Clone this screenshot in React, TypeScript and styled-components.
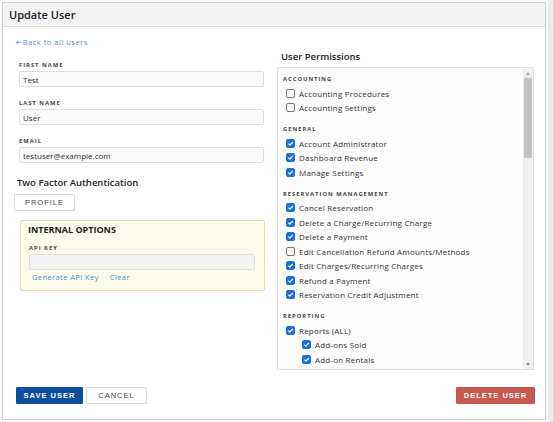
import styled, { createGlobalStyle } from 'styled-components'

const GlobalStyle = createGlobalStyle`
  html, body {
    margin: 0;
    padding: 0;
    background: #ededed;
  }
  body {
    font-family: "Open Sans", "Liberation Sans", sans-serif;
    color: #333;
  }
`

const Page = styled.div`
  width: 553px;
  height: 422px;
  box-sizing: border-box;
  padding: 2px 7px 2px 2px;
  background: linear-gradient(to right, #fafafa 0, #fafafa 548px, #ececec 548px);
`

const Modal = styled.div`
  height: 100%;
  box-sizing: border-box;
  background: #fff;
  border: 1px solid #cfcfcf;
  display: flex;
  flex-direction: column;
`

const Header = styled.div`
  height: 23px;
  flex: none;
  background: #f3f3f3;
  border-bottom: 1px solid #dcdcdc;
  display: flex;
  align-items: center;
  padding: 0 6px;
  font-size: 11px;
  font-weight: 600;
  color: #222;
`

const Body = styled.div`
  display: grid;
  grid-template-columns: 251px 257px;
  column-gap: 12px;
  padding: 10px 0 0 11px;
`

const LeftCol = styled.div`
  display: flex;
  flex-direction: column;
`

const BackLink = styled.a`
  font-size: 7.5px;
  color: #4a90d9;
  letter-spacing: 0.5px;
  margin-left: 2px;
  line-height: 10px;
  text-decoration: none;
`

const Arrow = styled.span`
  font-family: "DejaVu Sans", sans-serif;
  font-size: 8px;
  letter-spacing: 0;
`

const Field = styled.div<{ $inset?: number }>`
  display: flex;
  flex-direction: column;
  margin-left: ${({ $inset }) => ($inset ?? 5)}px;
  margin-top: ${({ $inset }) => ($inset === undefined ? 14 : 9)}px;
  & + & {
    margin-top: 13px;
  }
`

const Label = styled.label`
  font-size: 5.8px;
  font-weight: 700;
  letter-spacing: 1px;
  color: #444;
  text-transform: uppercase;
  line-height: 7px;
  margin-bottom: 2px;
`

const Input = styled.input<{ $muted?: boolean }>`
  box-sizing: border-box;
  height: 16px;
  width: ${({ $muted }) => ($muted ? 226 : 245)}px;
  border: 1px solid #dedede;
  border-radius: 2px;
  background: ${({ $muted }) => ($muted ? '#f3f3f3' : '#fafafa')};
  font-family: inherit;
  font-size: 8px;
  color: #333;
  padding: 0 3px;
  outline: none;
`

const SectionTitle = styled.div`
  font-size: 9.5px;
  font-weight: 600;
  color: #222;
  margin: 14px 0 0 3px;
  line-height: 12px;
`

const Button = styled.button<{ $variant?: 'primary' | 'danger' | 'plain'; $w: number }>`
  box-sizing: border-box;
  height: 17px;
  width: ${({ $w }) => $w}px;
  padding: 0;
  white-space: nowrap;
  border: 1px solid
    ${({ $variant }) =>
      $variant === 'primary' ? '#0b4a94' : $variant === 'danger' ? '#c0544a' : '#dcdcdc'};
  background: ${({ $variant }) =>
    $variant === 'primary' ? '#0c4f9e' : $variant === 'danger' ? '#c65a4f' : '#fff'};
  color: ${({ $variant }) => ($variant === 'plain' || !$variant ? '#444' : '#fff')};
  font-family: "Liberation Sans", Arial, sans-serif;
  font-weight: ${({ $variant }) => ($variant === 'plain' || !$variant ? 400 : 700)};
  font-size: 7.5px;
  letter-spacing: 1px;
  text-transform: uppercase;
  border-radius: 1px;
  cursor: pointer;
`

const ProfileButton = styled(Button)`
  align-self: flex-start;
  margin-top: 5px;
`

const Internal = styled.div`
  margin: 9px 0 0 6px;
  width: 245px;
  box-sizing: border-box;
  background: #fcfaea;
  border: 1px solid #e3dfae;
  border-radius: 2px;
  padding: 3px 0 8px 7px;
`

const InternalTitle = styled.div`
  font-size: 9px;
  font-weight: 700;
  color: #222;
  line-height: 12px;
`

const LinkRow = styled.div`
  display: flex;
  gap: 11px;
  margin: 2px 0 0 4px;
  font-size: 7.5px;
  letter-spacing: 0.4px;
  line-height: 10px;
  color: #4a90d9;
`

const RightCol = styled.div`
  display: flex;
  flex-direction: column;
  padding-top: 14px;
`

const PermTitle = styled.div`
  font-size: 9.5px;
  font-weight: 600;
  color: #222;
  line-height: 12px;
  margin-left: 4px;
  margin-bottom: 4px;
`

const PermBox = styled.div`
  height: 303px;
  box-sizing: border-box;
  border: 1px solid #dedede;
  background: #fcfcfc;
  overflow: hidden;
  display: flex;
`

const PermList = styled.div`
  flex: 1;
  padding: 6px 0 0 5px;
`

const ScrollTrack = styled.div`
  width: 10px;
  flex: none;
  background: #f1f1f1;
  display: flex;
  flex-direction: column;
`

const ScrollArrow = styled.div<{ $down?: boolean }>`
  height: 10px;
  flex: none;
  display: flex;
  align-items: center;
  justify-content: center;
  &::before {
    content: '';
    border-left: 2.5px solid transparent;
    border-right: 2.5px solid transparent;
    ${({ $down }) => ($down ? 'border-top: 3px solid #8a8a8a;' : 'border-bottom: 3px solid #a3a3a3;')}
  }
`

const ScrollThumb = styled.div`
  height: 80px;
  margin: 0 1px;
  background: #c1c1c1;
`

const ScrollRest = styled.div`
  flex: 1;
`

const Group = styled.div`
  margin-bottom: 9px;
`

const GroupTitle = styled.div`
  font-size: 5.8px;
  font-weight: 700;
  letter-spacing: 1px;
  color: #444;
  line-height: 10px;
  margin-bottom: 2px;
`

const Item = styled.div<{ $indent?: boolean }>`
  display: flex;
  align-items: center;
  gap: 4px;
  height: 14.5px;
  padding-left: ${({ $indent }) => ($indent ? 19 : 3)}px;
  font-size: 8px;
  letter-spacing: 0.2px;
  color: #333;
  white-space: nowrap;
`

const Box = styled.span<{ $checked: boolean }>`
  box-sizing: border-box;
  width: 9px;
  height: 9px;
  flex: none;
  border-radius: 2px;
  border: 1px solid ${({ $checked }) => ($checked ? '#1a6fd8' : '#777')};
  background: ${({ $checked }) => ($checked ? '#1a6fd8' : '#fff')};
  display: flex;
  align-items: center;
  justify-content: center;
`

const Footer = styled.div`
  margin-top: auto;
  display: flex;
  align-items: center;
  gap: 3px;
  padding: 0 10px 15px 13px;
`

const Spacer = styled.div`
  flex: 1;
`

function Check({ checked }: { checked: boolean }) {
  return (
    <Box $checked={checked}>
      {checked && (
        <svg width="7" height="7" viewBox="0 0 10 10">
          <path d="M2 5.2 L4.2 7.4 L8.2 2.6" fill="none" stroke="#fff" strokeWidth="1.8" />
        </svg>
      )}
    </Box>
  )
}

type Perm = { label: string; checked: boolean; indent?: boolean }

const groups: { title: string; items: Perm[] }[] = [
  {
    title: 'Accounting',
    items: [
      { label: 'Accounting Procedures', checked: false },
      { label: 'Accounting Settings', checked: false },
    ],
  },
  {
    title: 'General',
    items: [
      { label: 'Account Administrator', checked: true },
      { label: 'Dashboard Revenue', checked: true },
      { label: 'Manage Settings', checked: true },
    ],
  },
  {
    title: 'Reservation Management',
    items: [
      { label: 'Cancel Reservation', checked: true },
      { label: 'Delete a Charge/Recurring Charge', checked: true },
      { label: 'Delete a Payment', checked: true },
      { label: 'Edit Cancellation Refund Amounts/Methods', checked: false },
      { label: 'Edit Charges/Recurring Charges', checked: true },
      { label: 'Refund a Payment', checked: true },
      { label: 'Reservation Credit Adjustment', checked: true },
    ],
  },
  {
    title: 'Reporting',
    items: [
      { label: 'Reports (ALL)', checked: true },
      { label: 'Add-ons Sold', checked: true, indent: true },
      { label: 'Add-on Rentals', checked: true, indent: true },
    ],
  },
]

export default function App() {
  return (
    <Page>
      <GlobalStyle />
      <Modal>
        <Header>Update User</Header>
        <Body>
          <LeftCol>
            <BackLink href="#">
              <Arrow>←</Arrow>Back to all users
            </BackLink>
            <Field>
              <Label>First Name</Label>
              <Input defaultValue="Test" />
            </Field>
            <Field>
              <Label>Last Name</Label>
              <Input defaultValue="User" />
            </Field>
            <Field>
              <Label>Email</Label>
              <Input defaultValue="testuser@example.com" />
            </Field>
            <SectionTitle>Two Factor Authentication</SectionTitle>
            <ProfileButton $variant="plain" $w={61}>Profile</ProfileButton>
            <Internal>
              <InternalTitle>INTERNAL OPTIONS</InternalTitle>
              <Field $inset={1}>
                <Label>API Key</Label>
                <Input $muted />
              </Field>
              <LinkRow>
                <span>Generate API Key</span>
                <span>Clear</span>
              </LinkRow>
            </Internal>
          </LeftCol>
          <RightCol>
            <PermTitle>User Permissions</PermTitle>
            <PermBox>
              <PermList>
                {groups.map((g) => (
                  <Group key={g.title}>
                    <GroupTitle>{g.title.toUpperCase()}</GroupTitle>
                    {g.items.map((it) => (
                      <Item key={it.label} $indent={it.indent}>
                        <Check checked={it.checked} />
                        {it.label}
                      </Item>
                    ))}
                  </Group>
                ))}
              </PermList>
              <ScrollTrack>
                <ScrollArrow />
                <ScrollThumb />
                <ScrollRest />
                <ScrollArrow $down />
              </ScrollTrack>
            </PermBox>
          </RightCol>
        </Body>
        <Footer>
          <Button $variant="primary" $w={67}>Save User</Button>
          <Button $variant="plain" $w={61}>Cancel</Button>
          <Spacer />
          <Button $variant="danger" $w={79}>Delete User</Button>
        </Footer>
      </Modal>
    </Page>
  )
}
